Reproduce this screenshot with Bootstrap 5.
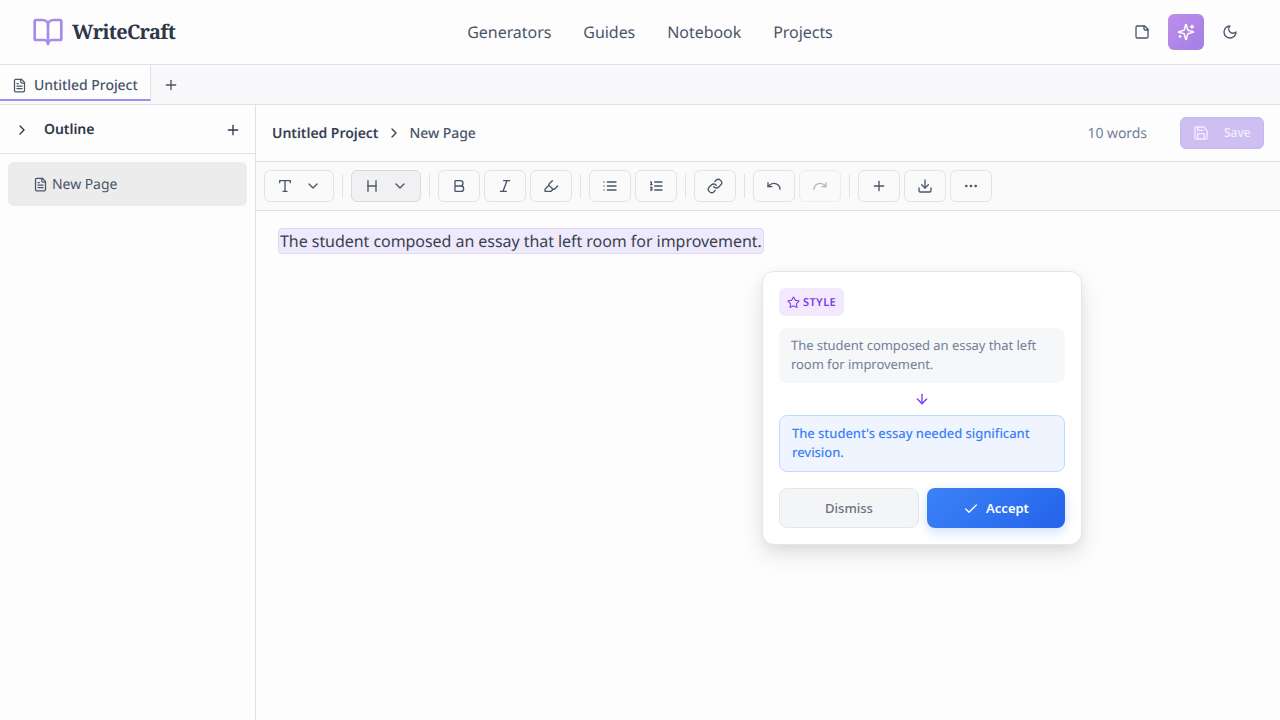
<!DOCTYPE html>
<html lang="en">
<head>
    <meta charset="UTF-8">
    <meta name="viewport" content="width=device-width, initial-scale=1.0">
    <title>WriteCraft</title>
    <link href="https://cdn.jsdelivr.net/npm/bootstrap@5.3.0/dist/css/bootstrap.min.css" rel="stylesheet">
    <style>
        body {
            font-family: "Noto Sans", sans-serif;
            text-rendering: geometricPrecision;
            letter-spacing: -0.05px;
            background: #fdfdfe;
            color: #374151;
            height: 720px;
            overflow: hidden;
        }
        svg.ico {
            fill: none;
            stroke: currentColor;
            stroke-width: 2;
            stroke-linecap: round;
            stroke-linejoin: round;
            flex: none;
        }
        .app-header {
            height: 65px;
            padding: 0 32px;
            border-bottom: 1px solid #e0e1e7;
        }
        .brand-box { width: 144px; gap: 8px; color: #a78bea; }
        .brand-name {
            font-family: "Noto Serif", "DejaVu Serif Condensed", serif;
            font-weight: 700;
            font-size: 20px;
            letter-spacing: -0.7px;
            color: #2d3748;
        }
        .top-nav { gap: 32px; }
        .top-nav a { color: #4a5568; font-size: 16px; text-decoration: none; }
        .head-btn {
            width: 36px;
            height: 36px;
            padding: 0;
            border: 0;
            border-radius: 6px;
            color: #4a5568;
        }
        .head-btn.is-on {
            background: linear-gradient(135deg, #bf8de9, #a27fe5);
            color: #fff;
        }
        .tab-bar {
            height: 40px;
            background: #f9f9fb;
            border-bottom: 1px solid #e0e1e7;
        }
        .file-tab {
            width: 151px;
            height: 36px;
            padding: 6px 0 0 12px;
            gap: 7px;
            background: #fdfdfe;
            border-right: 1px solid #e0e1e7;
            border-bottom: 2px solid #a78bea;
            font-size: 14px;
            font-weight: 500;
            color: #4a5568;
        }
        .tab-add { width: 40px; height: 39px; padding: 0; border: 0; color: #4a5568; }
        .work-area { height: 615px; }
        .side-panel { width: 256px; border-right: 1px solid #e0e1e7; }
        .outline-head {
            height: 49px;
            padding: 1px 14px 0;
            border-bottom: 1px solid #e0e1e7;
            font-size: 14px;
            font-weight: 600;
            color: #2d3748;
        }
        .outline-head .title { margin-left: 14px; }
        .page-item {
            height: 44px;
            margin: 8px;
            padding-left: 25px;
            gap: 4px;
            background: #ececed;
            border-radius: 6px;
            font-size: 14px;
            color: #4a5568;
        }
        .doc-head {
            height: 57px;
            padding: 0 16px;
            border-bottom: 1px solid #e0e1e7;
            font-size: 14px;
        }
        .crumb-root { font-weight: 600; color: #374151; }
        .crumb-sep { margin: 0 7px 0 8px; }
        .crumb-page { font-weight: 500; color: #4a5568; }
        .word-count { color: #718096; margin-right: 33px; }
        .save-btn {
            width: 84px;
            height: 32px;
            padding: 0 0 0 12px;
            gap: 15px;
            background: #cdbff1;
            border: 1px solid #c4b5f0;
            border-radius: 6px;
            font-size: 12px;
            font-weight: 500;
            color: #f3effc;
        }
        .tool-row {
            height: 49px;
            padding: 0 8px;
            gap: 4px;
            background: #fafafb;
            border-bottom: 1px solid #e0e1e7;
        }
        .tool-btn {
            width: 42px;
            height: 32px;
            padding: 0;
            border: 1px solid #e2e3e8;
            border-radius: 6px;
            color: #4a5568;
            background: transparent;
        }
        .tool-btn.wide { width: 70px; gap: 12px; }
        .tool-btn.is-active { background: #f1f1f3; border-color: #d9dade; }
        .tool-btn.is-off { color: #b4b9c2; border-color: #ececef; }
        .tool-sep { width: 1px; height: 24px; margin: 0 4px; background: #e2e3e8; }
        .editor-pane { padding: 17px 22px; position: relative; }
        .marked-text {
            display: inline-block;
            padding: 0 1px;
            line-height: 24px;
            background: #eee9fb;
            border: 1px solid #e0d8f8;
            border-radius: 4px;
            font-size: 16px;
            color: #374151;
        }
        .suggest-pop {
            position: absolute;
            left: 506px;
            top: 60px;
            width: 320px;
            height: 274px;
            padding: 16px;
            border: 1px solid #e3e6ec;
            border-radius: 12px;
            box-shadow: 0 10px 25px rgba(0, 0, 0, 0.1), 0 4px 10px rgba(0, 0, 0, 0.05);
        }
        .kind-tag {
            width: 65px;
            height: 28px;
            padding-left: 8px;
            gap: 3px;
            background: #f3e9fe;
            border-radius: 6px;
            font-size: 11px;
            font-weight: 600;
            letter-spacing: 0.4px;
            color: #7c3aed;
        }
        .kind-tag span { padding-top: 2px; }
        .old-text {
            height: 55px;
            margin-top: 12px;
            padding: 8px 12px;
            background: #f6f7f9;
            border-radius: 8px;
            font-size: 13px;
            line-height: 19px;
            color: #718096;
        }
        .change-arrow { height: 32px; color: #7c3aed; }
        .new-text {
            height: 57px;
            padding: 8px 12px;
            background: #eff4fe;
            border: 1px solid #bfdbfe;
            border-radius: 8px;
            font-size: 13px;
            font-weight: 500;
            line-height: 19px;
            color: #3b82f6;
        }
        .pop-actions { margin-top: 16px; gap: 8px; }
        .dismiss-btn {
            width: 140px;
            height: 40px;
            padding: 1px 0 0;
            background: #f4f5f7;
            border: 1px solid #e5e7eb;
            border-radius: 8px;
            font-size: 13px;
            font-weight: 500;
            color: #6b7280;
        }
        .accept-btn {
            width: 138px;
            height: 40px;
            padding: 1px 0 0;
            gap: 7px;
            background: linear-gradient(135deg, #3b82f6, #2563eb);
            border: 0;
            border-radius: 8px;
            box-shadow: 0 4px 12px rgba(59, 130, 246, 0.25);
            font-size: 13px;
            font-weight: 600;
            color: #fff;
        }
    </style>
</head>
<body>
    <header class="app-header d-flex align-items-center justify-content-between">
        <div class="brand-box d-flex align-items-center">
            <svg class="ico" width="32" height="32" viewBox="0 0 24 24"><path d="M12 7v14"/><path d="M3 18a1 1 0 0 1-1-1V4a1 1 0 0 1 1-1h5a4 4 0 0 1 4 4 4 4 0 0 1 4-4h5a1 1 0 0 1 1 1v13a1 1 0 0 1-1 1h-6a3 3 0 0 0-3 3 3 3 0 0 0-3-3z"/></svg>
            <span class="brand-name">WriteCraft</span>
        </div>
        <nav class="top-nav d-flex">
            <a href="#">Generators</a>
            <a href="#">Guides</a>
            <a href="#">Notebook</a>
            <a href="#">Projects</a>
        </nav>
        <div class="d-flex gap-2">
            <button class="btn head-btn d-flex align-items-center justify-content-center">
                <svg class="ico" width="16" height="16" viewBox="0 0 24 24"><path d="M16 3H5a2 2 0 0 0-2 2v14a2 2 0 0 0 2 2h14a2 2 0 0 0 2-2V8Z"/><path d="M15 3v4a2 2 0 0 0 2 2h4"/></svg>
            </button>
            <button class="btn head-btn is-on d-flex align-items-center justify-content-center">
                <svg class="ico" width="18" height="18" viewBox="0 0 24 24"><path d="M9.937 15.5A2 2 0 0 0 8.5 14.063l-6.135-1.582a.5.5 0 0 1 0-.962L8.5 9.936A2 2 0 0 0 9.937 8.5l1.582-6.135a.5.5 0 0 1 .963 0L14.063 8.5A2 2 0 0 0 15.5 9.937l6.135 1.581a.5.5 0 0 1 0 .964L15.5 14.063a2 2 0 0 0-1.437 1.437l-1.582 6.135a.5.5 0 0 1-.963 0z"/><path d="M20 3v4"/><path d="M22 5h-4"/><path d="M4 17v2"/><path d="M5 18H3"/></svg>
            </button>
            <button class="btn head-btn d-flex align-items-center justify-content-center">
                <svg class="ico" width="16" height="16" viewBox="0 0 24 24"><path d="M12 3a6 6 0 0 0 9 9 9 9 0 1 1-9-9Z"/></svg>
            </button>
        </div>
    </header>

    <div class="tab-bar d-flex">
        <div class="file-tab d-flex align-items-center">
            <svg class="ico" width="15" height="15" viewBox="0 0 24 24"><path d="M15 2H6a2 2 0 0 0-2 2v16a2 2 0 0 0 2 2h12a2 2 0 0 0 2-2V7Z"/><path d="M14 2v4a2 2 0 0 0 2 2h4"/><path d="M10 9H8"/><path d="M16 13H8"/><path d="M16 17H8"/></svg>
            <span>Untitled Project</span>
        </div>
        <button class="btn tab-add d-flex align-items-center justify-content-center">
            <svg class="ico" width="16" height="16" viewBox="0 0 24 24"><path d="M5 12h14"/><path d="M12 5v14"/></svg>
        </button>
    </div>

    <div class="work-area d-flex">
        <aside class="side-panel flex-shrink-0">
            <div class="outline-head d-flex align-items-center">
                <svg class="ico" width="16" height="16" viewBox="0 0 24 24"><path d="m9 18 6-6-6-6"/></svg>
                <span class="title flex-grow-1">Outline</span>
                <svg class="ico" width="16" height="16" viewBox="0 0 24 24"><path d="M5 12h14"/><path d="M12 5v14"/></svg>
            </div>
            <div class="page-item d-flex align-items-center">
                <svg class="ico" width="15" height="15" viewBox="0 0 24 24"><path d="M15 2H6a2 2 0 0 0-2 2v16a2 2 0 0 0 2 2h12a2 2 0 0 0 2-2V7Z"/><path d="M14 2v4a2 2 0 0 0 2 2h4"/><path d="M10 9H8"/><path d="M16 13H8"/><path d="M16 17H8"/></svg>
                <span>New Page</span>
            </div>
        </aside>

        <main class="flex-grow-1 d-flex flex-column">
            <div class="doc-head d-flex align-items-center">
                <span class="crumb-root">Untitled Project</span>
                <svg class="ico crumb-sep" width="16" height="16" viewBox="0 0 24 24"><path d="m9 18 6-6-6-6"/></svg>
                <span class="crumb-page flex-grow-1">New Page</span>
                <span class="word-count">10 words</span>
                <button class="btn save-btn d-flex align-items-center">
                    <svg class="ico" width="16" height="16" viewBox="0 0 24 24"><path d="M15.2 3a2 2 0 0 1 1.4.6l3.8 3.8a2 2 0 0 1 .6 1.4V19a2 2 0 0 1-2 2H5a2 2 0 0 1-2-2V5a2 2 0 0 1 2-2z"/><path d="M17 21v-7a1 1 0 0 0-1-1H8a1 1 0 0 0-1 1v7"/><path d="M7 3v4a1 1 0 0 0 1 1h7"/></svg>
                    <span>Save</span>
                </button>
            </div>

            <div class="tool-row d-flex align-items-center">
                <button class="btn tool-btn wide d-flex align-items-center justify-content-center">
                    <svg class="ico" width="16" height="16" viewBox="0 0 24 24"><path d="M4 7V4h16v3"/><path d="M9 20h6"/><path d="M12 4v16"/></svg>
                    <svg class="ico" width="16" height="16" viewBox="0 0 24 24"><path d="m6 9 6 6 6-6"/></svg>
                </button>
                <div class="tool-sep"></div>
                <button class="btn tool-btn wide is-active d-flex align-items-center justify-content-center">
                    <svg class="ico" width="16" height="16" viewBox="0 0 24 24"><path d="M6 12h12"/><path d="M6 20V4"/><path d="M18 20V4"/></svg>
                    <svg class="ico" width="16" height="16" viewBox="0 0 24 24"><path d="m6 9 6 6 6-6"/></svg>
                </button>
                <div class="tool-sep"></div>
                <button class="btn tool-btn d-flex align-items-center justify-content-center">
                    <svg class="ico" width="16" height="16" viewBox="0 0 24 24"><path d="M6 12h9a4 4 0 0 1 0 8H7a1 1 0 0 1-1-1V5a1 1 0 0 1 1-1h7a4 4 0 0 1 0 8"/></svg>
                </button>
                <button class="btn tool-btn d-flex align-items-center justify-content-center">
                    <svg class="ico" width="16" height="16" viewBox="0 0 24 24"><path d="M19 4h-9"/><path d="M14 20H5"/><path d="M15 4 9 20"/></svg>
                </button>
                <button class="btn tool-btn d-flex align-items-center justify-content-center">
                    <svg class="ico" width="16" height="16" viewBox="0 0 24 24"><path d="m9 11-6 6v3h9l3-3"/><path d="m22 12-4.6 4.6a2 2 0 0 1-2.8 0l-5.2-5.2a2 2 0 0 1 0-2.8L14 4"/></svg>
                </button>
                <div class="tool-sep"></div>
                <button class="btn tool-btn d-flex align-items-center justify-content-center">
                    <svg class="ico" width="16" height="16" viewBox="0 0 24 24"><path d="M3 12h.01"/><path d="M3 18h.01"/><path d="M3 6h.01"/><path d="M8 12h13"/><path d="M8 18h13"/><path d="M8 6h13"/></svg>
                </button>
                <button class="btn tool-btn d-flex align-items-center justify-content-center">
                    <svg class="ico" width="16" height="16" viewBox="0 0 24 24"><path d="M10 12h11"/><path d="M10 18h11"/><path d="M10 6h11"/><path d="M4 10h2"/><path d="M4 6h1v4"/><path d="M6 18H4c0-1 2-2 2-3s-1-1.5-2-1"/></svg>
                </button>
                <div class="tool-sep"></div>
                <button class="btn tool-btn d-flex align-items-center justify-content-center">
                    <svg class="ico" width="16" height="16" viewBox="0 0 24 24"><path d="M10 13a5 5 0 0 0 7.54.54l3-3a5 5 0 0 0-7.07-7.07l-1.72 1.71"/><path d="M14 11a5 5 0 0 0-7.54-.54l-3 3a5 5 0 0 0 7.07 7.07l1.71-1.71"/></svg>
                </button>
                <div class="tool-sep"></div>
                <button class="btn tool-btn d-flex align-items-center justify-content-center">
                    <svg class="ico" width="16" height="16" viewBox="0 0 24 24"><path d="M3 7v6h6"/><path d="M21 17a9 9 0 0 0-9-9 9 9 0 0 0-6 2.3L3 13"/></svg>
                </button>
                <button class="btn tool-btn is-off d-flex align-items-center justify-content-center">
                    <svg class="ico" width="16" height="16" viewBox="0 0 24 24"><path d="M21 7v6h-6"/><path d="M3 17a9 9 0 0 1 9-9 9 9 0 0 1 6 2.3l3 2.7"/></svg>
                </button>
                <div class="tool-sep"></div>
                <button class="btn tool-btn d-flex align-items-center justify-content-center">
                    <svg class="ico" width="16" height="16" viewBox="0 0 24 24"><path d="M5 12h14"/><path d="M12 5v14"/></svg>
                </button>
                <button class="btn tool-btn d-flex align-items-center justify-content-center">
                    <svg class="ico" width="16" height="16" viewBox="0 0 24 24"><path d="M21 15v4a2 2 0 0 1-2 2H5a2 2 0 0 1-2-2v-4"/><path d="m7 10 5 5 5-5"/><path d="M12 15V3"/></svg>
                </button>
                <button class="btn tool-btn d-flex align-items-center justify-content-center">
                    <svg class="ico" width="16" height="16" viewBox="0 0 24 24"><circle cx="12" cy="12" r="1"/><circle cx="19" cy="12" r="1"/><circle cx="5" cy="12" r="1"/></svg>
                </button>
            </div>

            <div class="editor-pane flex-grow-1">
                <span class="marked-text">The student composed an essay that left room for improvement.</span>
                <div class="suggest-pop card">
                    <div class="kind-tag d-flex align-items-center">
                        <svg class="ico" width="13" height="13" viewBox="0 0 24 24"><path d="M11.525 2.295a.53.53 0 0 1 .95 0l2.31 4.679a2.12 2.12 0 0 0 1.595 1.16l5.166.756a.53.53 0 0 1 .294.904l-3.736 3.638a2.12 2.12 0 0 0-.611 1.878l.882 5.14a.53.53 0 0 1-.771.56l-4.618-2.428a2.12 2.12 0 0 0-1.973 0L6.396 21.01a.53.53 0 0 1-.77-.56l.881-5.139a2.12 2.12 0 0 0-.611-1.879L2.16 9.795a.53.53 0 0 1 .294-.906l5.165-.755a2.12 2.12 0 0 0 1.597-1.16z"/></svg>
                        <span>STYLE</span>
                    </div>
                    <div class="old-text">The student composed an essay that left room for improvement.</div>
                    <div class="change-arrow d-flex align-items-center justify-content-center">
                        <svg class="ico" width="16" height="16" viewBox="0 0 24 24"><path d="M12 5v14"/><path d="m19 12-7 7-7-7"/></svg>
                    </div>
                    <div class="new-text">The student's essay needed significant revision.</div>
                    <div class="pop-actions d-flex">
                        <button class="btn dismiss-btn">Dismiss</button>
                        <button class="btn accept-btn d-flex align-items-center justify-content-center">
                            <svg class="ico" width="16" height="16" viewBox="0 0 24 24"><path d="M20 6 9 17l-5-5"/></svg>
                            <span>Accept</span>
                        </button>
                    </div>
                </div>
            </div>
        </main>
    </div>

    <script src="https://cdn.jsdelivr.net/npm/bootstrap@5.3.0/dist/js/bootstrap.bundle.min.js"></script>
</body>
</html>
